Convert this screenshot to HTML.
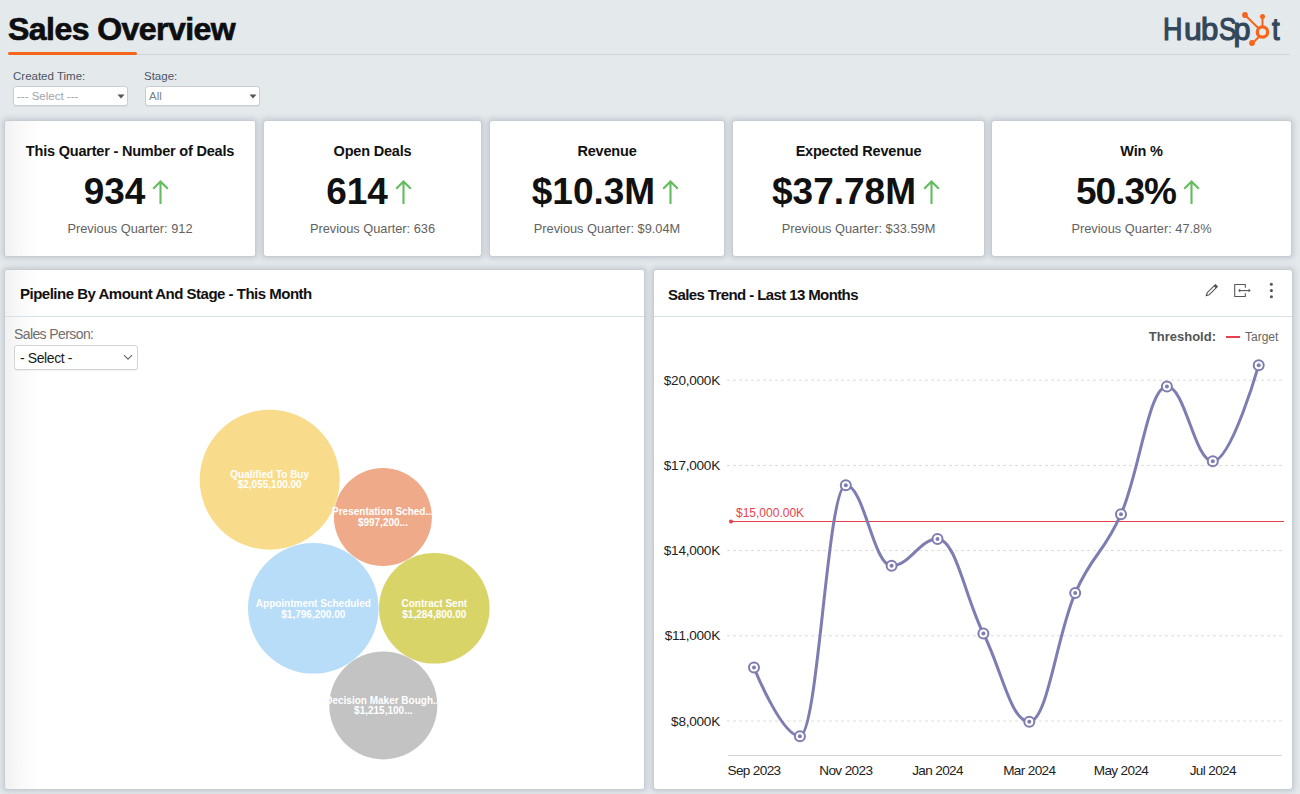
<!DOCTYPE html>
<html><head><meta charset="utf-8">
<style>
*{box-sizing:border-box;margin:0;padding:0}
html,body{width:1300px;height:794px;overflow:hidden;background:#e4e9ec;font-family:"Liberation Sans",sans-serif;position:relative}
.a{position:absolute;white-space:nowrap}
.card{position:absolute;background:#fff;border-radius:2px;box-shadow:0 0 1px rgba(110,120,140,.5),0 0 5px 3px rgba(140,150,165,.32)}
.ct{position:absolute;left:0;right:0;text-align:center;white-space:nowrap}
.ttl{top:144px;font-weight:bold;font-size:14.5px;line-height:15px;color:#111;letter-spacing:-.2px}
.num{top:173px;font-weight:bold;font-size:37px;line-height:37px;color:#111}
.num svg{display:inline-block;vertical-align:baseline;margin-left:7px;margin-right:7px}
.prev{top:221.5px;font-size:12.8px;line-height:13px;color:#626262}
</style></head><body>

<!-- header -->
<div class="a" style="left:8px;top:13px;font-weight:bold;font-size:32px;line-height:32px;color:#0e0e10;letter-spacing:-.55px;-webkit-text-stroke:.7px #0e0e10">Sales Overview</div>
<div class="a" style="left:8px;top:52px;width:129px;height:2.7px;background:#f5661b;border-radius:2px"></div>
<div class="a" style="left:137px;top:54px;width:1153px;height:1px;background:#cfd4da"></div>


<!-- logo -->
<div class="a" style="left:0;top:0;font-weight:normal;font-size:30.5px;line-height:30px;color:#33475b;-webkit-text-stroke:1.2px #33475b">
<span class="a" style="left:1163px;top:13.5px;transform:scaleX(.88);transform-origin:0 0">H</span>
<span class="a" style="left:1183.5px;top:13.5px;transform:scaleX(1.05);transform-origin:0 0">u</span>
<span class="a" style="left:1200.5px;top:13.5px;transform:scaleX(1.02);transform-origin:0 0">b</span>
<span class="a" style="left:1218.5px;top:13.5px;transform:scaleX(.86);transform-origin:0 0">S</span>
<span class="a" style="left:1233.5px;top:13.5px;transform:scaleX(1);transform-origin:0 0">p</span>
<span class="a" style="left:1272px;top:13.5px;transform:scaleX(.9);transform-origin:0 0">t</span>
</div>
<svg class="a" style="left:1236px;top:8px" width="40" height="42" viewBox="1236 8 40 42">
<g fill="none" stroke="#f5661b" stroke-linecap="round">
<circle cx="1262.5" cy="32" r="5.2" stroke-width="3.3"/>
<path d="M1262.5 26.5V17" stroke-width="2"/>
<path d="M1258.8 28.5L1245.5 15.5" stroke-width="2"/>
<path d="M1259.5 36.5L1252.5 43" stroke-width="2"/>
</g>
<g fill="#f5661b"><circle cx="1262.5" cy="16.5" r="2.5"/><circle cx="1245" cy="15" r="2.9"/><circle cx="1252" cy="43" r="2.9"/></g>
</svg>

<!-- filters -->
<div class="a" style="left:13px;top:70px;font-size:11.5px;line-height:12px;color:#4b5563">Created Time:</div>
<div class="a" style="left:13px;top:86px;width:115px;height:20px;background:#fff;border:1px solid #c9ced6;border-radius:3px;box-shadow:0 1px 1px rgba(0,0,0,.06)"></div>
<div class="a" style="left:17px;top:90px;font-size:11.5px;line-height:12px;color:#a0a4aa">--- Select ---</div>
<div class="a" style="left:144px;top:70px;font-size:11.5px;line-height:12px;color:#4b5563">Stage:</div>
<div class="a" style="left:145px;top:86px;width:115px;height:20px;background:#fff;border:1px solid #c9ced6;border-radius:3px;box-shadow:0 1px 1px rgba(0,0,0,.06)"></div>
<div class="a" style="left:149px;top:90px;font-size:11.5px;line-height:12px;color:#7a7f86">All</div>

<svg class="a" style="left:117px;top:94px" width="8" height="5"><path d="M0.5 0.5h7L4 4.5z" fill="#555"/></svg>
<svg class="a" style="left:249px;top:94px" width="8" height="5"><path d="M0.5 0.5h7L4 4.5z" fill="#555"/></svg>

<!-- cards -->
<div class="card" style="left:5px;top:121px;width:250px;height:135px;background:linear-gradient(to right,#f1f1f1,#f9f9f9 14px,#fff 36px)"></div>
<div class="card" style="left:264px;top:121px;width:217px;height:135px"></div>
<div class="card" style="left:490px;top:121px;width:234px;height:135px"></div>
<div class="card" style="left:733px;top:121px;width:251px;height:135px"></div>
<div class="card" style="left:992px;top:121px;width:299px;height:135px"></div>


<!-- card content -->
<div class="a" style="left:5px;top:0;width:250px;height:260px"><div class="ct ttl">This Quarter - Number of Deals</div><div class="ct num">934<svg width="17" height="25" viewBox="0 0 17 25"><path d="M8.5 25V2.5M1.2 9.8L8.5 2.5l7.3 7.3" fill="none" stroke="#63bd5f" stroke-width="2.1"/></svg></div><div class="ct prev">Previous Quarter: 912</div></div>
<div class="a" style="left:264px;top:0;width:217px;height:260px"><div class="ct ttl">Open Deals</div><div class="ct num">614<svg width="17" height="25" viewBox="0 0 17 25"><path d="M8.5 25V2.5M1.2 9.8L8.5 2.5l7.3 7.3" fill="none" stroke="#63bd5f" stroke-width="2.1"/></svg></div><div class="ct prev">Previous Quarter: 636</div></div>
<div class="a" style="left:490px;top:0;width:234px;height:260px"><div class="ct ttl">Revenue</div><div class="ct num" style="left:4px">$10.3M<svg width="17" height="25" viewBox="0 0 17 25"><path d="M8.5 25V2.5M1.2 9.8L8.5 2.5l7.3 7.3" fill="none" stroke="#63bd5f" stroke-width="2.1"/></svg></div><div class="ct prev">Previous Quarter: $9.04M</div></div>
<div class="a" style="left:733px;top:0;width:251px;height:260px"><div class="ct ttl">Expected Revenue</div><div class="ct num" style="left:2px">$37.78M<svg width="17" height="25" viewBox="0 0 17 25"><path d="M8.5 25V2.5M1.2 9.8L8.5 2.5l7.3 7.3" fill="none" stroke="#63bd5f" stroke-width="2.1"/></svg></div><div class="ct prev">Previous Quarter: $33.59M</div></div>
<div class="a" style="left:992px;top:0;width:299px;height:260px"><div class="ct ttl">Win %</div><div class="ct num"><span style="letter-spacing:-1px">50.3%</span><svg width="17" height="25" viewBox="0 0 17 25"><path d="M8.5 25V2.5M1.2 9.8L8.5 2.5l7.3 7.3" fill="none" stroke="#63bd5f" stroke-width="2.1"/></svg></div><div class="ct prev">Previous Quarter: 47.8%</div></div>

<!-- panels -->
<div class="card" style="left:5px;top:270px;width:639px;height:519px;background:linear-gradient(to right,#f1f1f1,#f9f9f9 14px,#fff 36px)"></div>
<div class="card" style="left:654px;top:270px;width:638px;height:519px"></div>


<!-- left panel content -->
<div class="a" style="left:20px;top:286px;font-weight:bold;font-size:15px;line-height:15px;color:#111;letter-spacing:-.5px">Pipeline By Amount And Stage - This Month</div>
<div class="a" style="left:5px;top:316px;width:639px;height:1px;background:#d8e0e8"></div>
<div class="a" style="left:14px;top:327px;font-size:14px;line-height:14px;color:#6e6e6e;letter-spacing:-.6px">Sales Person:</div>
<div class="a" style="left:14px;top:345px;width:124px;height:25px;background:#fff;border:1px solid #d4d4d4;border-radius:3px;box-shadow:0 1px 1px rgba(0,0,0,.05)"></div>
<div class="a" style="left:20px;top:351px;font-size:14px;line-height:14px;color:#1a1a1a;letter-spacing:-.4px">- Select -</div>
<svg class="a" style="left:123px;top:354px" width="10" height="7"><path d="M1 1.2l4 4 4-4" fill="none" stroke="#666" stroke-width="1.1"/></svg>

<svg class="a" style="left:0;top:0" width="1300" height="794">
<g>
<circle cx="269.7" cy="479.7" r="70" fill="#f9dc8b"/>
<circle cx="382.9" cy="517" r="49" fill="#efaa89"/>
<circle cx="313.3" cy="608.3" r="65.3" fill="#b7ddf8"/>
<circle cx="434.3" cy="608.3" r="55.3" fill="#d8d468"/>
<circle cx="383.3" cy="705.4" r="54" fill="#c3c3c3"/>
</g>
<g fill="#fff" font-family="Liberation Sans" font-weight="bold" font-size="10" text-anchor="middle">
<text x="269.7" y="478">Qualified To Buy</text><text x="269.7" y="488">$2,055,100.00</text>
<text x="382.9" y="515">Presentation Sched...</text><text x="382.9" y="526">$997,200...</text>
<text x="313.3" y="606.6">Appointment Scheduled</text><text x="313.3" y="617.6">$1,796,200.00</text>
<text x="434.3" y="606.6">Contract Sent</text><text x="434.3" y="617.6">$1,284,800.00</text>
<text x="383.3" y="703.6">Decision Maker Bough...</text><text x="383.3" y="713.7">$1,215,100...</text>
</g>
</svg>

<!-- right panel content -->
<div class="a" style="left:668px;top:287px;font-weight:bold;font-size:15px;line-height:15px;color:#111;letter-spacing:-.6px">Sales Trend - Last 13 Months</div>
<div class="a" style="left:654px;top:316px;width:638px;height:1px;background:#d8e0e8"></div>


<!-- chart -->
<svg class="a" style="left:0;top:0" width="1300" height="794">
<g font-family="Liberation Sans" font-size="13.6" fill="#222" letter-spacing="-0.25">
<line x1="727" y1="380.2" x2="1282" y2="380.2" stroke="#dcdcdc" stroke-width="1" stroke-dasharray="3 3"/>
<text x="720" y="384.7" text-anchor="end">$20,000K</text>
<line x1="727" y1="465.4" x2="1282" y2="465.4" stroke="#dcdcdc" stroke-width="1" stroke-dasharray="3 3"/>
<text x="720" y="469.9" text-anchor="end">$17,000K</text>
<line x1="727" y1="550.6" x2="1282" y2="550.6" stroke="#dcdcdc" stroke-width="1" stroke-dasharray="3 3"/>
<text x="720" y="555.1" text-anchor="end">$14,000K</text>
<line x1="727" y1="635.8" x2="1282" y2="635.8" stroke="#dcdcdc" stroke-width="1" stroke-dasharray="3 3"/>
<text x="720" y="640.3" text-anchor="end">$11,000K</text>
<line x1="727" y1="721" x2="1282" y2="721" stroke="#dcdcdc" stroke-width="1" stroke-dasharray="3 3"/>
<text x="720" y="726" text-anchor="end">$8,000K</text>

</g>
<line x1="728" y1="755.5" x2="1282" y2="755.5" stroke="#cfd3d8" stroke-width="1"/>
<line x1="731" y1="521.5" x2="1284" y2="521.5" stroke="#e8414e" stroke-width="1"/>
<circle cx="731" cy="521.5" r="2" fill="#e8414e"/>
<text x="736" y="516.8" font-family="Liberation Sans" font-size="12" fill="#e8414e">$15,000.00K</text>
<path d="M754.0 667.6C754.0 667.6 781.5 736.2 799.9 736.2C818.2 736.2 827.4 485.3 845.8 485.3C864.1 485.3 873.3 565.8 891.6 565.8C910.0 565.8 919.2 539.0 937.5 539.0C955.9 539.0 965.0 597.0 983.4 633.5C1001.8 670.0 1010.9 721.7 1029.3 721.7C1047.6 721.7 1056.8 634.6 1075.2 593.1C1093.5 551.6 1102.7 555.5 1121.0 514.2C1139.4 472.9 1148.6 386.5 1166.9 386.5C1185.3 386.5 1194.4 461.2 1212.8 461.2C1231.2 461.2 1258.7 365.2 1258.7 365.2" fill="none" stroke="#7e7db1" stroke-width="3"/>
<circle cx="754.0" cy="667.6" r="5" fill="#fff" stroke="#7e7db1" stroke-width="2"/><circle cx="754.0" cy="667.6" r="2" fill="#7e7db1"/><circle cx="799.9" cy="736.2" r="5" fill="#fff" stroke="#7e7db1" stroke-width="2"/><circle cx="799.9" cy="736.2" r="2" fill="#7e7db1"/><circle cx="845.8" cy="485.3" r="5" fill="#fff" stroke="#7e7db1" stroke-width="2"/><circle cx="845.8" cy="485.3" r="2" fill="#7e7db1"/><circle cx="891.6" cy="565.8" r="5" fill="#fff" stroke="#7e7db1" stroke-width="2"/><circle cx="891.6" cy="565.8" r="2" fill="#7e7db1"/><circle cx="937.5" cy="539.0" r="5" fill="#fff" stroke="#7e7db1" stroke-width="2"/><circle cx="937.5" cy="539.0" r="2" fill="#7e7db1"/><circle cx="983.4" cy="633.5" r="5" fill="#fff" stroke="#7e7db1" stroke-width="2"/><circle cx="983.4" cy="633.5" r="2" fill="#7e7db1"/><circle cx="1029.3" cy="721.7" r="5" fill="#fff" stroke="#7e7db1" stroke-width="2"/><circle cx="1029.3" cy="721.7" r="2" fill="#7e7db1"/><circle cx="1075.2" cy="593.1" r="5" fill="#fff" stroke="#7e7db1" stroke-width="2"/><circle cx="1075.2" cy="593.1" r="2" fill="#7e7db1"/><circle cx="1121.0" cy="514.2" r="5" fill="#fff" stroke="#7e7db1" stroke-width="2"/><circle cx="1121.0" cy="514.2" r="2" fill="#7e7db1"/><circle cx="1166.9" cy="386.5" r="5" fill="#fff" stroke="#7e7db1" stroke-width="2"/><circle cx="1166.9" cy="386.5" r="2" fill="#7e7db1"/><circle cx="1212.8" cy="461.2" r="5" fill="#fff" stroke="#7e7db1" stroke-width="2"/><circle cx="1212.8" cy="461.2" r="2" fill="#7e7db1"/><circle cx="1258.7" cy="365.2" r="5" fill="#fff" stroke="#7e7db1" stroke-width="2"/><circle cx="1258.7" cy="365.2" r="2" fill="#7e7db1"/>
<g font-family="Liberation Sans" font-size="13.6" fill="#222" text-anchor="middle" letter-spacing="-0.65"><text x="754.0" y="775">Sep 2023</text><text x="845.8" y="775">Nov 2023</text><text x="937.5" y="775">Jan 2024</text><text x="1029.3" y="775">Mar 2024</text><text x="1121.0" y="775">May 2024</text><text x="1212.8" y="775">Jul 2024</text></g>
<text x="1216" y="340.6" font-family="Liberation Sans" font-size="13" font-weight="bold" fill="#555" text-anchor="end">Threshold:</text>
<line x1="1226" y1="337" x2="1240" y2="337" stroke="#e8414e" stroke-width="2"/>
<text x="1245" y="340.6" font-family="Liberation Sans" font-size="12" fill="#666">Target</text>
<g fill="none" stroke="#555" stroke-width="1.1" stroke-linejoin="round">
<path d="M1206.2 295.8L1207.3 292.7L1215.4 284.6L1217.4 286.6L1209.3 294.7Z"/>
<path d="M1214.6 285.4l2 2" stroke-width="2.2"/>
<path d="M1245.3 287.8v-3.3h-10.6v12h10.6v-3.3"/>
<path d="M1239.5 290.6h9.6"/>
</g>
<g fill="#555"><path d="M1238.2 290.6l2-2v4z"/><path d="M1250.6 290.6l-2-2v4z"/></g>
<g fill="#555"><circle cx="1271.4" cy="284.2" r="1.55"/><circle cx="1271.4" cy="290.6" r="1.55"/><circle cx="1271.4" cy="296.8" r="1.55"/></g>
</svg>

</body></html>
